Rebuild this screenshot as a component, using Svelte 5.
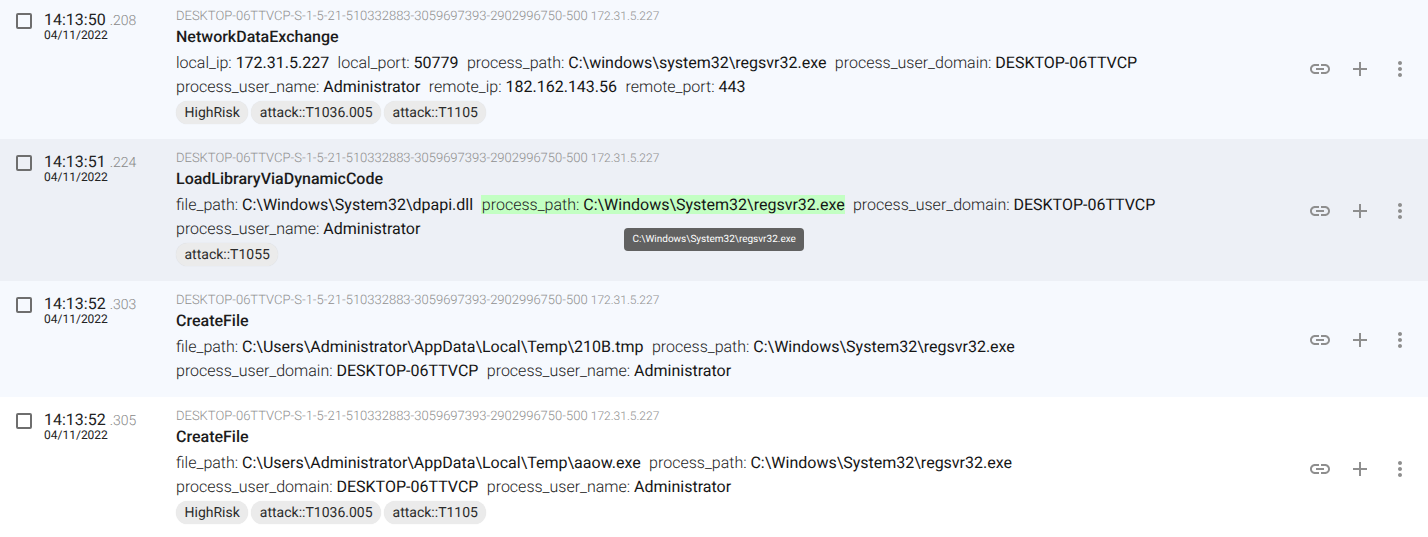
<script>
  const host = 'DESKTOP-06TTVCP-S-1-5-21-510332883-3059697393-2902996750-500';
  const ip = '172.31.5.227';
  const date = '04/11/2022';

  const events = [
    {
      time: '14:13:50', ms: '.208', name: 'NetworkDataExchange',
      fields: [
        ['local_ip', '172.31.5.227'],
        ['local_port', '50779'],
        ['process_path', 'C:\\windows\\system32\\regsvr32.exe'],
        ['process_user_domain', 'DESKTOP-06TTVCP'],
        ['process_user_name', 'Administrator'],
        ['remote_ip', '182.162.143.56'],
        ['remote_port', '443']
      ],
      tags: ['HighRisk', 'attack::T1036.005', 'attack::T1105']
    },
    {
      time: '14:13:51', ms: '.224', name: 'LoadLibraryViaDynamicCode', hover: true,
      fields: [
        ['file_path', 'C:\\Windows\\System32\\dpapi.dll'],
        ['process_path', 'C:\\Windows\\System32\\regsvr32.exe', true],
        ['process_user_domain', 'DESKTOP-06TTVCP'],
        ['process_user_name', 'Administrator']
      ],
      tags: ['attack::T1055']
    },
    {
      time: '14:13:52', ms: '.303', name: 'CreateFile',
      fields: [
        ['file_path', 'C:\\Users\\Administrator\\AppData\\Local\\Temp\\210B.tmp'],
        ['process_path', 'C:\\Windows\\System32\\regsvr32.exe'],
        ['process_user_domain', 'DESKTOP-06TTVCP'],
        ['process_user_name', 'Administrator']
      ],
      tags: []
    },
    {
      time: '14:13:52', ms: '.305', name: 'CreateFile', plain: true,
      fields: [
        ['file_path', 'C:\\Users\\Administrator\\AppData\\Local\\Temp\\aaow.exe'],
        ['process_path', 'C:\\Windows\\System32\\regsvr32.exe'],
        ['process_user_domain', 'DESKTOP-06TTVCP'],
        ['process_user_name', 'Administrator']
      ],
      tags: ['HighRisk', 'attack::T1036.005', 'attack::T1105']
    }
  ];
</script>

<div class="list">
  {#each events as ev}
    <div class="row" class:hover={ev.hover} class:plain={ev.plain}>
      <div class="check"></div>
      <div class="when">
        <div class="time">{ev.time} <span class="ms">{ev.ms}</span></div>
        <div class="date">{date}</div>
      </div>
      <div class="body">
        <div class="source">{host} <span class="ip">{ip}</span></div>
        <div class="name">{ev.name}</div>
        <div class="fields">
          {#each ev.fields as f}
            <span class="field" class:match={f[2]}>{f[0]}: <span class="value">{f[1]}</span></span>
          {/each}
        </div>
        {#if ev.tags.length}
          <div class="tags">
            {#each ev.tags as t}
              <span class="tag">{t}</span>
            {/each}
          </div>
        {/if}
      </div>
      <div class="actions">
        <svg viewBox="0 0 24 24" width="24" height="24">
          <path d="M3.9 12c0-1.71 1.39-3.1 3.1-3.1h4V7H7c-2.76 0-5 2.24-5 5s2.24 5 5 5h4v-1.9H7c-1.71 0-3.1-1.39-3.1-3.1zM8 13h8v-2H8v2zm9-6h-4v1.9h4c1.71 0 3.1 1.39 3.1 3.1s-1.39 3.1-3.1 3.1h-4V17h4c2.76 0 5-2.24 5-5s-2.24-5-5-5z"/>
        </svg>
        <svg viewBox="0 0 24 24" width="24" height="24">
          <path d="M19 13h-6v6h-2v-6H5v-2h6V5h2v6h6v2z"/>
        </svg>
        <svg viewBox="0 0 24 24" width="24" height="24">
          <path d="M12 8c1.1 0 2-.9 2-2s-.9-2-2-2-2 .9-2 2 .9 2 2 2zm0 2c-1.1 0-2 .9-2 2s.9 2 2 2 2-.9 2-2-.9-2-2-2zm0 6c-1.1 0-2 .9-2 2s.9 2 2 2 2-.9 2-2-.9-2-2-2z"/>
        </svg>
      </div>
      {#if ev.hover}
        <div class="tooltip">C:\Windows\System32\regsvr32.exe</div>
      {/if}
    </div>
  {/each}
</div>

<style>
  :global(body) {
    margin: 0;
    background: #fff;
    overflow: hidden;
    font-family: Roboto, sans-serif;
    text-rendering: geometricPrecision;
  }

  .list {
    margin-top: -3px;
  }

  .row {
    position: relative;
    display: flex;
    align-items: flex-start;
    padding: 12px 16px 14px 16px;
    background: #f6f9fe;
  }

  .row.hover {
    background: #edf0f6;
  }

  .row.plain {
    background: #fff;
  }

  .check {
    box-sizing: border-box;
    flex: none;
    width: 16px;
    height: 16px;
    margin-top: 4px;
    border: 2px solid #6e6e6e;
    border-radius: 2px;
  }

  .when {
    flex: none;
    width: 132px;
    margin-left: 12px;
    color: #222;
  }

  .time {
    font-size: 16px;
    line-height: 18px;
    margin-top: 2px;
  }

  .ms {
    font-size: 14px;
    font-weight: 300;
    color: #888;
  }

  .date {
    font-size: 12px;
    line-height: 12px;
    margin-top: -1px;
  }

  .body {
    flex: 1;
    min-width: 0;
    padding-right: 24px;
  }

  .source {
    height: 14px;
    font-size: 13px;
    line-height: 14px;
    font-weight: 300;
    color: #8f8f8f;
  }

  .ip {
    font-size: 12px;
  }

  .name {
    margin-top: 2px;
    font-size: 16px;
    line-height: 24px;
    font-weight: 500;
    color: #1c1c1c;
  }

  .fields {
    margin-top: 2px;
    font-size: 16px;
    line-height: 24px;
    font-weight: 300;
    color: #222;
  }

  .field {
    display: inline-block;
    margin-right: 8.4px;
    vertical-align: top;
  }

  .field.match {
    margin-left: -0.6px;
    margin-right: 8.2px;
    margin-top: 2px;
    padding-left: 1px;
    line-height: 19px;
    background: #c3ffc3;
  }

  .value {
    font-weight: 400;
    color: #151515;
  }

  .tags {
    display: flex;
    gap: 3px;
    margin-top: 2px;
    margin-bottom: 1px;
  }

  .tag {
    box-sizing: border-box;
    height: 23px;
    padding: 0 8.5px;
    border-radius: 12px;
    font-size: 14px;
    line-height: 24px;
    color: #2b2b2b;
    background: #ebebeb;
    box-shadow: 0 0 1px rgba(0, 0, 0, 0.12);
  }

  .actions {
    flex: none;
    align-self: center;
    display: flex;
    gap: 16px;
    margin-top: 4px;
  }

  .actions svg {
    fill: #8e8e8e;
    display: block;
  }

  .tooltip {
    position: absolute;
    left: 624px;
    top: 89px;
    height: 23px;
    padding: 0 8.4px;
    border-radius: 4px;
    font-size: 10px;
    line-height: 23px;
    color: #fff;
    background: #616161;
  }
</style>
